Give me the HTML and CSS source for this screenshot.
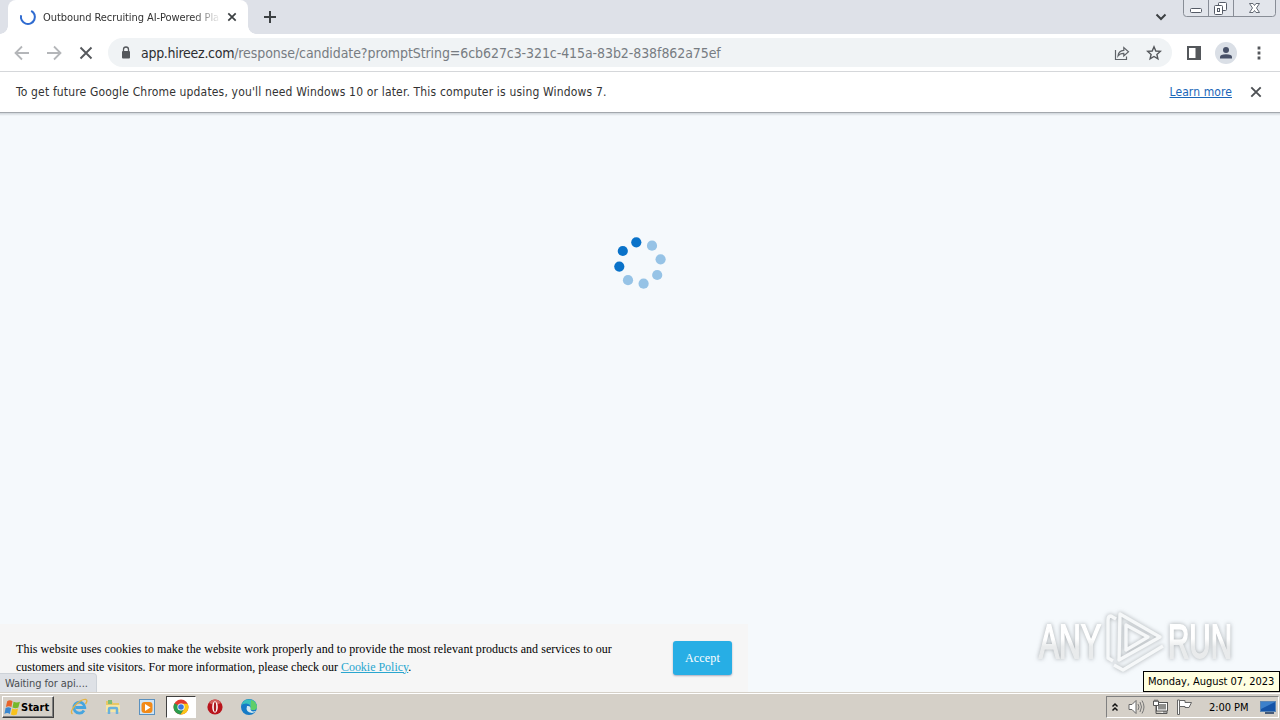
FILE: index.html
```html
<!DOCTYPE html>
<html>
<head>
	<meta charset="utf-8">
	<title>Outbound Recruiting AI-Powered Platform</title>
	<link rel="stylesheet" href="styles.css">
</head>
<body>
	<div class="tabstrip">
		<div class="tab">
			<svg class="throbber" width="18" height="18" viewBox="0 0 18 18"><path d="M2.1 7.3A7 7 0 1 0 12.2 2.8" fill="none" stroke="#2f6bd0" stroke-width="2"/></svg>
			<span class="tabTitle">Outbound Recruiting AI-Powered Pla</span>
			<svg class="tabClose" width="10" height="10" viewBox="0 0 10 10"><path d="M1.300 1.300L8.700 8.700M8.700 1.300L1.300 8.700" stroke="#3c4043" stroke-width="1.700"/></svg>
		</div>
		<svg class="newTab" width="12" height="12" viewBox="0 0 12 12"><path d="M6 0V12M0 6H12" stroke="#3c4043" stroke-width="2"/></svg>
		<svg class="tabSearch" width="12" height="8" viewBox="0 0 12 8"><path d="M1.500 1.500L6 6L10.500 1.500" fill="none" stroke="#3c4043" stroke-width="2"/></svg>
		<svg class="winBtns" width="94" height="18" viewBox="0 0 94 18">
			<path d="M.5 0V13.500Q.5 16.500 3.500 16.500H89.500Q92.500 16.500 92.500 13.500V0M25.500 0V16.500M50.500 0V16.500" fill="#e2e5eb" stroke="#888d96"/>
			<rect x="7.500" y="8.500" width="11" height="4" rx="1" fill="#fff" stroke="#555b66"/>
			<rect x="35.500" y="2.500" width="8" height="8" rx="1" fill="#fff" stroke="#555b66"/>
			<rect x="31.500" y="5.500" width="8" height="9" rx="1" fill="#fff" stroke="#555b66"/>
			<rect x="34.500" y="8.500" width="2" height="3" fill="#fff" stroke="#555b66"/>
			<path d="M66.500 3.500H70L71.500 5.500L73 3.500H76.500L73.500 8L76.500 12.500H73L71.500 10.500L70 12.500H66.500L69.500 8Z" fill="#fff" stroke="#555b66" stroke-width=".9"/>
		</svg>
	</div>

	<div class="toolbar">
		<svg class="nav" width="16" height="16" viewBox="0 0 16 16"><path d="M15 8H2M8 1.500L1.500 8L8 14.500" fill="none" stroke="#b4b6b9" stroke-width="1.800"/></svg>
		<svg class="nav" width="16" height="16" viewBox="0 0 16 16"><path d="M1 8H14M8 1.500L14.500 8L8 14.500" fill="none" stroke="#b4b6b9" stroke-width="1.800"/></svg>
		<svg class="nav" width="16" height="16" viewBox="0 0 16 16"><path d="M2.500 2.500L13.500 13.500M13.500 2.500L2.500 13.500" stroke="#55585c" stroke-width="1.900"/></svg>
		<div class="omnibox">
			<svg class="lock" width="10" height="13" viewBox="0 0 10 13"><rect x="1" y="5" width="8" height="7.500" rx="1" fill="#54575b"/><path d="M2.500 5.500V3.500a2.500 2.500 0 0 1 5 0V5.500" fill="none" stroke="#54575b" stroke-width="1.300"/></svg>
			<span class="url"><b>app.hireez.com</b>/response/candidate?promptString=6cb627c3-321c-415a-83b2-838f862a75ef</span>
			<svg class="share" width="16" height="16" viewBox="0 0 16 16"><path d="M1.500 5V14.500H12.500V11.500M4 11Q4.500 5.500 9.800 5.300V2.500L14.500 6.800L9.800 11V8.300Q6 8.200 4 11Z" fill="none" stroke="#5f6368" stroke-width="1.200"/></svg>
			<svg class="star" width="16" height="16" viewBox="0 0 16 16"><path d="M8 1.800L9.800 6L14.300 6.400L10.900 9.400L11.900 13.900L8 11.500L4.100 13.900L5.100 9.400L1.700 6.400L6.200 6Z" fill="none" stroke="#54575b" stroke-width="1.400"/></svg>
		</div>
		<svg class="panel" width="14" height="14" viewBox="0 0 14 14"><path d="M0 0H14V14H0ZM2 2V12H8.500V2Z" fill="#54575b" fill-rule="evenodd"/></svg>
		<svg class="avatar" width="22" height="22" viewBox="0 0 22 22"><circle cx="11" cy="11" r="11" fill="#dadfe6"/><circle cx="11" cy="8" r="3" fill="#475067"/><path d="M5 16.500V15Q5 12.300 11 12.200Q17 12.300 17 15V16.500Z" fill="#475067"/></svg>
		<svg class="menu" width="4" height="14" viewBox="0 0 4 14"><path d="M.6 .6h2.800v2.800h-2.800zM.6 5.600h2.800v2.800h-2.800zM.6 10.600h2.800v2.800h-2.800z" fill="#54575b"/></svg>
	</div>

	<div class="infobar">
		<span class="infoText">To get future Google Chrome updates, you'll need Windows 10 or later. This computer is using Windows 7.</span>
		<a class="learn">Learn more</a>
		<svg class="infoClose" width="12" height="12" viewBox="0 0 12 12"><path d="M1.300 1.300L10.700 10.700M10.700 1.300L1.300 10.700" stroke="#4d5054" stroke-width="1.900"/></svg>
	</div>

	<div class="page">
		<svg class="spinner" width="54" height="54" viewBox="0 0 54 54">
			<g fill="#0972c9"><circle cx="23.300" cy="6.300" r="5.100"/><circle cx="9.800" cy="15" r="5.100"/><circle cx="6.300" cy="30.600" r="5.100"/></g>
			<g fill="#96c3e6"><circle cx="39" cy="9.700" r="5.100"/><circle cx="47.600" cy="23.300" r="5.100"/><circle cx="44.200" cy="39" r="5.100"/><circle cx="30.600" cy="47.700" r="5.100"/><circle cx="15" cy="44.200" r="5.100"/></g>
		</svg>
		<div class="cookie">
			<p class="cookieText"><span class="line1">This website uses cookies to make the website work properly and to provide the most relevant products and services to our</span><br><span class="line2">customers and site visitors. For more information, please check our <a>Cookie Policy</a>.</span></p>
			<div class="accept">Accept</div>
		</div>
		<div class="status">Waiting for api....</div>
		<svg class="watermark" width="220" height="74" viewBox="0 0 220 74">
			<defs>
				<linearGradient id="wmFill" x1="0" y1="0" x2="0" y2="1">
					<stop offset=".45" stop-color="#fff"/>
					<stop offset=".6" stop-color="#e9ebec"/>
				</linearGradient>
			</defs>
			<g class="wmText">
				<text x="9" y="50" textLength="62" lengthAdjust="spacingAndGlyphs">ANY</text>
				<text x="138" y="50" textLength="64" lengthAdjust="spacingAndGlyphs">RUN</text>
			</g>
			<g class="wmLogo">
				<path d="M86 11L81 8Q78 8 78 12V50L83 53"/>
				<path d="M90 6L130 29L89 52Z"/>
				<path d="M96 17L118 29L96 42Z"/>
				<path d="M84 57L93 62L133 38"/>
			</g>
		</svg>
	</div>

	<div class="taskbar">
		<div class="start">
			<svg width="17" height="17" viewBox="0 0 16 16"><path d="M3 2Q5.500 .5 8 2L7 7.500Q4.500 6 1.800 7.500Z" fill="#e8642b"/><path d="M9 2.500Q12 4 15 2.500L13.500 8Q11 9.500 8 8Z" fill="#76b82a"/><path d="M1.500 8.500Q4 7 6.700 8.500L5.500 14Q3 12.500 .4 14Z" fill="#3a87cf"/><path d="M7.700 9Q10.500 10.500 13.200 9L12 14.500Q9 16 6.500 14.500Z" fill="#f9c21c"/></svg>
			<span>Start</span>
		</div>
		<div class="quick">
			<svg width="18" height="18" viewBox="0 0 18 18"><path d="M14 12.500A5.500 5.500 0 1 1 14.800 9.500H5.500" fill="none" stroke="#46a5df" stroke-width="2.800"/><path d="M2.500 16Q-.5 14 5 7.500Q12 .5 16 1.500Q18 2.500 15.500 6" fill="none" stroke="#e4b343" stroke-width="1.300"/></svg>
		</div>
		<div class="quick">
			<svg width="18" height="18" viewBox="0 0 18 18"><path d="M2 3H8L9 5H15V14H2Z" fill="#e8c766"/><path d="M4 2H8V6H4Z" fill="#7fbd74"/><path d="M2 7H16V14H2Z" fill="#f6e6a4"/><path d="M5 16V11Q5 10 6 10H12Q13 10 13 11V16" fill="none" stroke="#69b1dc" stroke-width="2.500"/></svg>
		</div>
		<div class="quick">
			<svg width="18" height="18" viewBox="0 0 18 18"><rect x="1.500" y="1.500" width="15" height="15" fill="#cfe4f5" stroke="#5b91bf"/><rect x="3.500" y="4" width="11" height="11" rx="3" fill="#f28a18"/><path d="M7 6L12.500 9.500L7 13Z" fill="#fff"/></svg>
		</div>
		<div class="quick active">
			<svg width="16" height="16" viewBox="0 0 16 16"><circle cx="8" cy="8" r="7.500" fill="#e33b2e"/><path d="M8 8L1.500 4.300A7.500 7.500 0 0 0 7.500 15.500L11.300 9.900Z" fill="#2a9d4e"/><path d="M8 8L11.300 9.900L7.500 15.500A7.500 7.500 0 0 0 14.700 4.700H8Z" fill="#fbc617"/><circle cx="8" cy="8" r="3.600" fill="#fff"/><circle cx="8" cy="8" r="2.800" fill="#3a77e0"/></svg>
		</div>
		<div class="quick">
			<svg width="16" height="16" viewBox="0 0 16 16"><circle cx="8" cy="8" r="7.600" fill="#b9141c"/><path d="M2 4A7 7 0 0 1 14 4Q8 7 2 4Z" fill="#d4605d"/><ellipse cx="8" cy="8" rx="2.800" ry="5.800" fill="#fff"/><ellipse cx="8" cy="8" rx="1.200" ry="4.900" fill="#aa1c20"/></svg>
		</div>
		<div class="quick">
			<svg width="18" height="18" viewBox="0 0 18 18"><circle cx="9" cy="9" r="8" fill="#167bc6"/><path d="M1.500 7A8 8 0 0 1 17 8.500Q17 12 13 12Q9.500 12 10.500 10Q11 6 6.500 5.500Q3 5.400 1.500 7Z" fill="#39c1bd"/><path d="M11 2A8 8 0 0 1 17 8.500Q17 12 13 12Q10 12 10.500 10Z" fill="#5fce68"/><path d="M7 8Q5 14 12 15Q15 14.500 16 13Q10 14.500 10.500 10Q10.500 7.500 7 8Z" fill="#d5e9ef"/></svg>
		</div>
		<div class="tray">
			<svg width="8" height="11" viewBox="0 0 8 11"><path d="M1.500 4.500L4 2L6.500 4.500M1.500 8.500L4 6L6.500 8.500" fill="none" stroke="#111" stroke-width="1.500"/></svg>
			<svg class="speaker" width="17" height="16" viewBox="0 0 17 16"><path d="M1 5.500H4L8 1.500V14.500L4 10.500H1Z" fill="#fff" stroke="#666"/><path d="M10 5Q12 8 10 11M12 3Q15 8 12 13M14 1.500Q18 8 14 14.500" fill="none" stroke="#777"/></svg>
			<svg class="network" width="17" height="16" viewBox="0 0 17 16"><rect x="4.500" y="3.500" width="11" height="8.500" fill="#fff" stroke="#555"/><rect x="6" y="5" width="8" height="5.500" fill="#8e8e8c"/><path d="M6 14.500H15V13H11" fill="#fff" stroke="#555"/><path d="M1.500 2H6.500V6.500H1.500Z" fill="#fff" stroke="#555"/><path d="M3 .5V3M5 .5V3M4 6.500V14.500H6" fill="none" stroke="#555"/></svg>
			<svg class="flag" width="17" height="16" viewBox="0 0 17 16"><path d="M1.500 1H3.500V15.500H1.500Z" fill="#fff" stroke="#666"/><path d="M3.500 1.500H9V3.500H15.500L13 8.500H9V7.500H3.500Z" fill="#fff" stroke="#666"/></svg>
			<span class="clock">2:00 PM</span>
			<svg class="desk" width="16" height="13" viewBox="0 0 16 13"><rect x=".5" y=".5" width="15" height="10" fill="#1554a8" stroke="#5b86b5"/><path d="M1 1H15L1 8Z" fill="#3c80cb"/><path d="M5 12H14" stroke="#16355e" stroke-width="1.500"/></svg>
		</div>
	</div>
	<div class="dateTip">Monday, August 07, 2023</div>
</body>
</html>
```
FILE: styles.css
```css
body{
	margin: 0;
	width: 1280px;
	height: 720px;
	overflow: hidden;
	display: flex;
	flex-direction: column;
	position: relative;
	font-family: "DejaVu Sans Condensed","DejaVu Sans",sans-serif;
	font-stretch: condensed;
	color: #333;
}
svg{
	display: block;
	flex: none;
}
span,a,.status,.dateTip{
	white-space: nowrap;
}
.tabstrip{
	height: 34px;
	background-color: #dee1e8;
	display: flex;
	align-items: flex-start;
}
.tab{
	width: 240px;
	height: 34px;
	margin-left: 8px;
	box-sizing: border-box;
	padding: 0 11px;
	border-radius: 8px 8px 0 0;
	background-color: #fff;
	display: flex;
	align-items: center;
	position: relative;
}
/* flared feet of the active tab */
.tab:before,.tab:after{
	content: "";
	position: absolute;
	bottom: 0;
	width: 8px;
	height: 8px;
}
.tab:before{
	left: -8px;
	background: radial-gradient(circle at 0 0,transparent 7.5px,#fff 8px);
}
.tab:after{
	right: -8px;
	background: radial-gradient(circle at 100% 0,transparent 7.5px,#fff 8px);
}
.tabTitle{
	width: 176px;
	margin-left: 6px;
	overflow: hidden;
	font-size: 11px;
	letter-spacing: -.08px;
	-webkit-mask-image: linear-gradient(90deg,#000 150px,transparent 178px);
}
.tabClose{
	margin-left: 8px;
}
.newTab{
	margin: 11px 0 0 16px;
}
.tabSearch{
	margin: 13px 0 0 auto;
}
.winBtns{
	margin-left: 16px;
	margin-right: 3px;
}
.toolbar{
	height: 38px;
	box-sizing: border-box;
	padding-left: 14px;
	border-bottom: 1px solid #d5d7da;
	background-color: #fff;
	display: flex;
	align-items: center;
}
.nav{
	margin-right: 16px;
}
.omnibox{
	width: 1064px;
	height: 29px;
	margin-left: -2px;
	box-sizing: border-box;
	padding-left: 13px;
	padding-right: 10px;
	border-radius: 15px;
	background-color: #f0f3f5;
	display: flex;
	align-items: center;
}
.url{
	margin-left: 10px;
	font-size: 14px;
	letter-spacing: -.08px;
	color: #777c82;
}
.url b{
	font-weight: normal;
	letter-spacing: -.28px;
	color: #2c2e32;
}
.share{
	margin-left: auto;
}
.star{
	margin-left: 16px;
}
.panel{
	margin-left: 15px;
}
.avatar{
	margin-left: 14px;
}
.menu{
	margin-left: 20px;
}
.infobar{
	height: 40px;
	padding: 0 18px 0 16px;
	background-color: #fff;
	display: flex;
	align-items: center;
	font-size: 12px;
}
.infoText{
	letter-spacing: .165px;
}
.learn{
	margin-left: auto;
	letter-spacing: .1px;
	color: #1a66b8;
	text-decoration: underline;
}
.infoClose{
	margin-left: 18px;
}
.page{
	flex: 1;
	min-height: 0;
	border-top: 1px solid #a3a8ad;
	background: linear-gradient(#cfd5da,#f5f9fc 3px);
	display: flex;
	flex-direction: column;
	align-items: flex-start;
	position: relative;
}
.spinner{
	margin: 123px 0 0 613px;
}
.cookie{
	width: 748px;
	height: 69px;
	margin-top: auto;
	box-sizing: border-box;
	padding-left: 16px;
	padding-bottom: 2px;
	background-color: #f6f6f6;
	display: flex;
	align-items: center;
}
.cookieText{
	width: 657px;
	margin: 0;
	font-family: "Liberation Serif",serif;
	font-size: 12px;
	line-height: 18px;
	color: #000;
}
.line1{
	letter-spacing: .05px;
}
.line2{
	letter-spacing: -.015px;
}
.cookieText a{
	color: #29a6cf;
	text-decoration: underline;
}
.accept{
	width: 59px;
	height: 34px;
	border-radius: 3px;
	background-color: #27aee5;
	box-shadow: 0 1px 2px #aab;
	color: #fff;
	font: 12px/34px "Liberation Serif",serif;
	text-align: center;
	letter-spacing: .2px;
}
.status{
	position: absolute;
	left: 0;
	bottom: 0;
	width: 97px;
	height: 20px;
	box-sizing: border-box;
	padding-left: 5px;
	border: 1px solid #cdd2d8;
	border-left: 0;
	border-radius: 0 4px 0 0;
	background-color: #dee1e6;
	font-size: 11px;
	line-height: 19px;
	letter-spacing: -.1px;
	color: #4a4d51;
}
.watermark{
	position: absolute;
	right: 30px;
	bottom: 11px;
	filter: drop-shadow(0 0 2px rgba(90,95,100,.5));
}
.wmText{
	font-family: "Liberation Sans",sans-serif;
	font-size: 48px;
	fill: url(#wmFill);
	stroke: url(#wmFill);
	stroke-width: 1.8;
}
.wmLogo{
	fill: none;
	stroke: #f6f8f9;
	stroke-width: 3.4;
	stroke-linejoin: round;
}
.taskbar{
	height: 27px;
	box-sizing: border-box;
	border-top: 1px solid #fff;
	background-color: #d5d0c8;
	box-shadow: 0 -1px #d5d0c8;
	padding-left: 2px;
	display: flex;
	align-items: center;
	position: relative;
}
.start{
	width: 52px;
	height: 22px;
	box-sizing: border-box;
	margin-right: 8px;
	padding-left: 1px;
	border: 1px solid;
	border-color: #fff #404040 #404040 #fff;
	box-shadow: inset -1px -1px #808080;
	display: flex;
	align-items: center;
	font-size: 11px;
	font-weight: bold;
	color: #000;
}
.quick{
	width: 30px;
	height: 22px;
	margin: 0 2px;
	box-sizing: border-box;
	display: flex;
	align-items: center;
	justify-content: center;
}
.active{
	border: 1px solid;
	border-color: #404040 #fff #fff #404040;
	background-color: #fff;
}
.tray{
	width: 173px;
	height: 22px;
	box-sizing: border-box;
	margin-left: auto;
	margin-right: 1px;
	padding-left: 4px;
	border: 1px solid;
	border-color: #808080 #fff #fff #808080;
	display: flex;
	align-items: center;
}
.speaker{
	margin-left: 9px;
}
.network{
	margin-left: 7px;
}
.flag{
	margin-left: 7px;
}
.clock{
	width: 40px;
	margin-left: 16px;
	font-size: 11px;
	letter-spacing: -.05px;
	color: #000;
}
.desk{
	margin-left: 11px;
}
.dateTip{
	position: absolute;
	left: 1143px;
	top: 671px;
	width: 137px;
	height: 21px;
	box-sizing: border-box;
	padding-left: 4px;
	border: 1px solid #000;
	background-color: #ffffe1;
	font-size: 11px;
	line-height: 19px;
	letter-spacing: -.04px;
	color: #000;
}
```
